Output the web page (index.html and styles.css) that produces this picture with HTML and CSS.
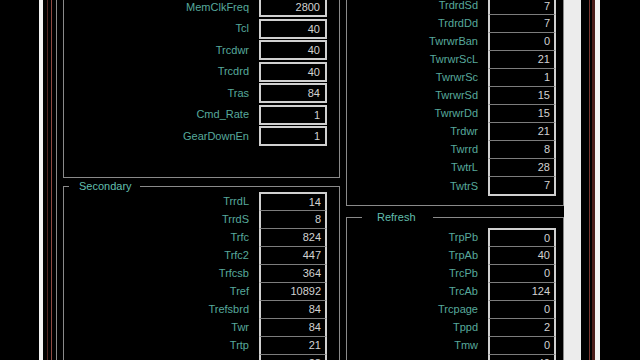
FILE: index.html
```html
<!DOCTYPE html>
<html lang="en">
<head>
    <meta charset="UTF-8">
    <meta name="viewport" content="width=device-width, initial-scale=1.0">
    <title>Memory Timings</title>
    <link rel="stylesheet" href="styles.css">
</head>
<body>
    <div class="screen">
        <div class="bezel">
            <div class="rim">
                <div class="rim-inner">
                    <div class="window">
                        <div class="panels">

                            <!-- Columna izquierda -->
                            <div class="col">
                                <fieldset class="group primary">
                                    <div class="prow"><span class="label">MemClkFreq</span><span class="box">2800</span></div>
                                    <div class="prow"><span class="label">Tcl</span><span class="box">40</span></div>
                                    <div class="prow"><span class="label">Trcdwr</span><span class="box">40</span></div>
                                    <div class="prow"><span class="label">Trcdrd</span><span class="box">40</span></div>
                                    <div class="prow"><span class="label">Tras</span><span class="box">84</span></div>
                                    <div class="prow"><span class="label">Cmd_Rate</span><span class="box">1</span></div>
                                    <div class="prow"><span class="label">GearDownEn</span><span class="box">1</span></div>
                                </fieldset>

                                <fieldset class="group secondary">
                                    <legend class="legend">Secondary</legend>
                                    <div class="grid">
                                        <div class="row"><span class="label">TrrdL</span><span class="cell">14</span></div>
                                        <div class="row"><span class="label">TrrdS</span><span class="cell">8</span></div>
                                        <div class="row"><span class="label">Trfc</span><span class="cell">824</span></div>
                                        <div class="row"><span class="label">Trfc2</span><span class="cell">447</span></div>
                                        <div class="row"><span class="label">Trfcsb</span><span class="cell">364</span></div>
                                        <div class="row"><span class="label">Tref</span><span class="cell">10892</span></div>
                                        <div class="row"><span class="label">Trefsbrd</span><span class="cell">84</span></div>
                                        <div class="row"><span class="label">Twr</span><span class="cell">84</span></div>
                                        <div class="row"><span class="label">Trtp</span><span class="cell">21</span></div>
                                        <div class="row"><span class="label">Tfaw</span><span class="cell">28</span></div>
                                    </div>
                                </fieldset>
                            </div>

                            <!-- Columna derecha -->
                            <div class="col">
                                <fieldset class="group turn">
                                    <div class="grid">
                                        <div class="row"><span class="label">TrdrdSd</span><span class="cell">7</span></div>
                                        <div class="row"><span class="label">TrdrdDd</span><span class="cell">7</span></div>
                                        <div class="row"><span class="label">TwrwrBan</span><span class="cell">0</span></div>
                                        <div class="row"><span class="label">TwrwrScL</span><span class="cell">21</span></div>
                                        <div class="row"><span class="label">TwrwrSc</span><span class="cell">1</span></div>
                                        <div class="row"><span class="label">TwrwrSd</span><span class="cell">15</span></div>
                                        <div class="row"><span class="label">TwrwrDd</span><span class="cell">15</span></div>
                                        <div class="row"><span class="label">Trdwr</span><span class="cell">21</span></div>
                                        <div class="row"><span class="label">Twrrd</span><span class="cell">8</span></div>
                                        <div class="row"><span class="label">TwtrL</span><span class="cell">28</span></div>
                                        <div class="row"><span class="label">TwtrS</span><span class="cell">7</span></div>
                                    </div>
                                </fieldset>

                                <fieldset class="group refresh">
                                    <legend class="legend">Refresh</legend>
                                    <div class="grid">
                                        <div class="row"><span class="label">TrpPb</span><span class="cell">0</span></div>
                                        <div class="row"><span class="label">TrpAb</span><span class="cell">40</span></div>
                                        <div class="row"><span class="label">TrcPb</span><span class="cell">0</span></div>
                                        <div class="row"><span class="label">TrcAb</span><span class="cell">124</span></div>
                                        <div class="row"><span class="label">Trcpage</span><span class="cell">0</span></div>
                                        <div class="row"><span class="label">Tppd</span><span class="cell">2</span></div>
                                        <div class="row"><span class="label">Tmw</span><span class="cell">0</span></div>
                                        <div class="row"><span class="label">Trfcpb</span><span class="cell">40</span></div>
                                    </div>
                                </fieldset>
                            </div>

                        </div>
                        <div class="scrollbar"></div>
                    </div>
                </div>
            </div>
        </div>
    </div>
</body>
</html>
```

FILE: styles.css
```css
/* Base */
body {
    margin: 0;
    background-color: #000;
    font-family: "Liberation Sans", Arial, sans-serif;
    font-size: 11px;
    overflow: hidden;
}

.screen {
    display: flex;
    height: 360px;
    padding-left: 39px;
}

/* Marco del monitor */
.bezel {
    display: flex;
    width: 561px;
    box-sizing: border-box;
    border-left: 4px solid #f2f2f2;
    border-right: 5px solid #f2f2f2;
    padding-left: 4px;
}

.rim {
    display: flex;
    flex: 1;
    border-left: 1px solid #4e2421;
    border-right: 3px solid #4a1d1a;
    padding-left: 3px;
    padding-right: 2px;
}

.rim-inner {
    display: flex;
    flex: 1;
    border-left: 1px solid #8e4a43;
    border-right: 1px solid #7a3530;
    padding-left: 4px;
    padding-right: 8px;
}

.window {
    display: flex;
    flex: 1;
    border-left: 1px solid #8a8a8a;
    overflow: hidden;
}

.panels {
    flex: 1;
    display: grid;
    grid-template-columns: 277px 1fr;
    column-gap: 6px;
    padding-left: 6px;
    align-items: start;
}

.scrollbar {
    width: 17px;
    background-color: #ececec;
}

/* Grupos */
.col {
    display: flex;
    flex-direction: column;
    margin-top: -20px;
}

.group {
    margin: 0;
    min-width: 0;
    border: 1px solid #8a8a8a;
    padding: 0;
}

.legend {
    color: #62bfae;
    line-height: 11px;
    padding: 0;
}

.primary {
    display: flex;
    flex-direction: column;
    gap: 1.5px;
    padding: 16px 12px 31px 0;
}

.secondary {
    margin-top: 3px;
    padding: 0 12px 0 0;
}

.secondary .legend {
    margin-left: 5px;
    padding: 0 8px 0 10px;
}

.turn {
    padding: 15px 7px 9px 0;
}

.refresh {
    margin-top: 6px;
    padding: 5px 7px 0 0;
}

.refresh .legend {
    margin-left: 15px;
    padding: 0 17px 0 15px;
}

/* Filas */
.label {
    color: #57a99c;
    line-height: 13px;
}

.prow,
.row {
    display: flex;
    justify-content: flex-end;
    align-items: center;
    gap: 10px;
}

.box {
    width: 68px;
    height: 20px;
    box-sizing: border-box;
    border: 2px solid #d0d0d0;
    padding-right: 5px;
    line-height: 16px;
    text-align: right;
    color: #d2d2d2;
}

.cell {
    width: 68px;
    box-sizing: border-box;
    height: 18px;
    border-left: 2px solid #d0d0d0;
    border-right: 2px solid #d0d0d0;
    border-top: 1px solid #7c7c7c;
    padding-right: 4px;
    line-height: 17px;
    text-align: right;
    color: #d2d2d2;
}

.row:first-child .cell {
    border-top: 2px solid #d0d0d0;
    line-height: 16px;
}

.row:last-child .cell {
    height: 20px;
    border-bottom: 2px solid #d0d0d0;
}
```
